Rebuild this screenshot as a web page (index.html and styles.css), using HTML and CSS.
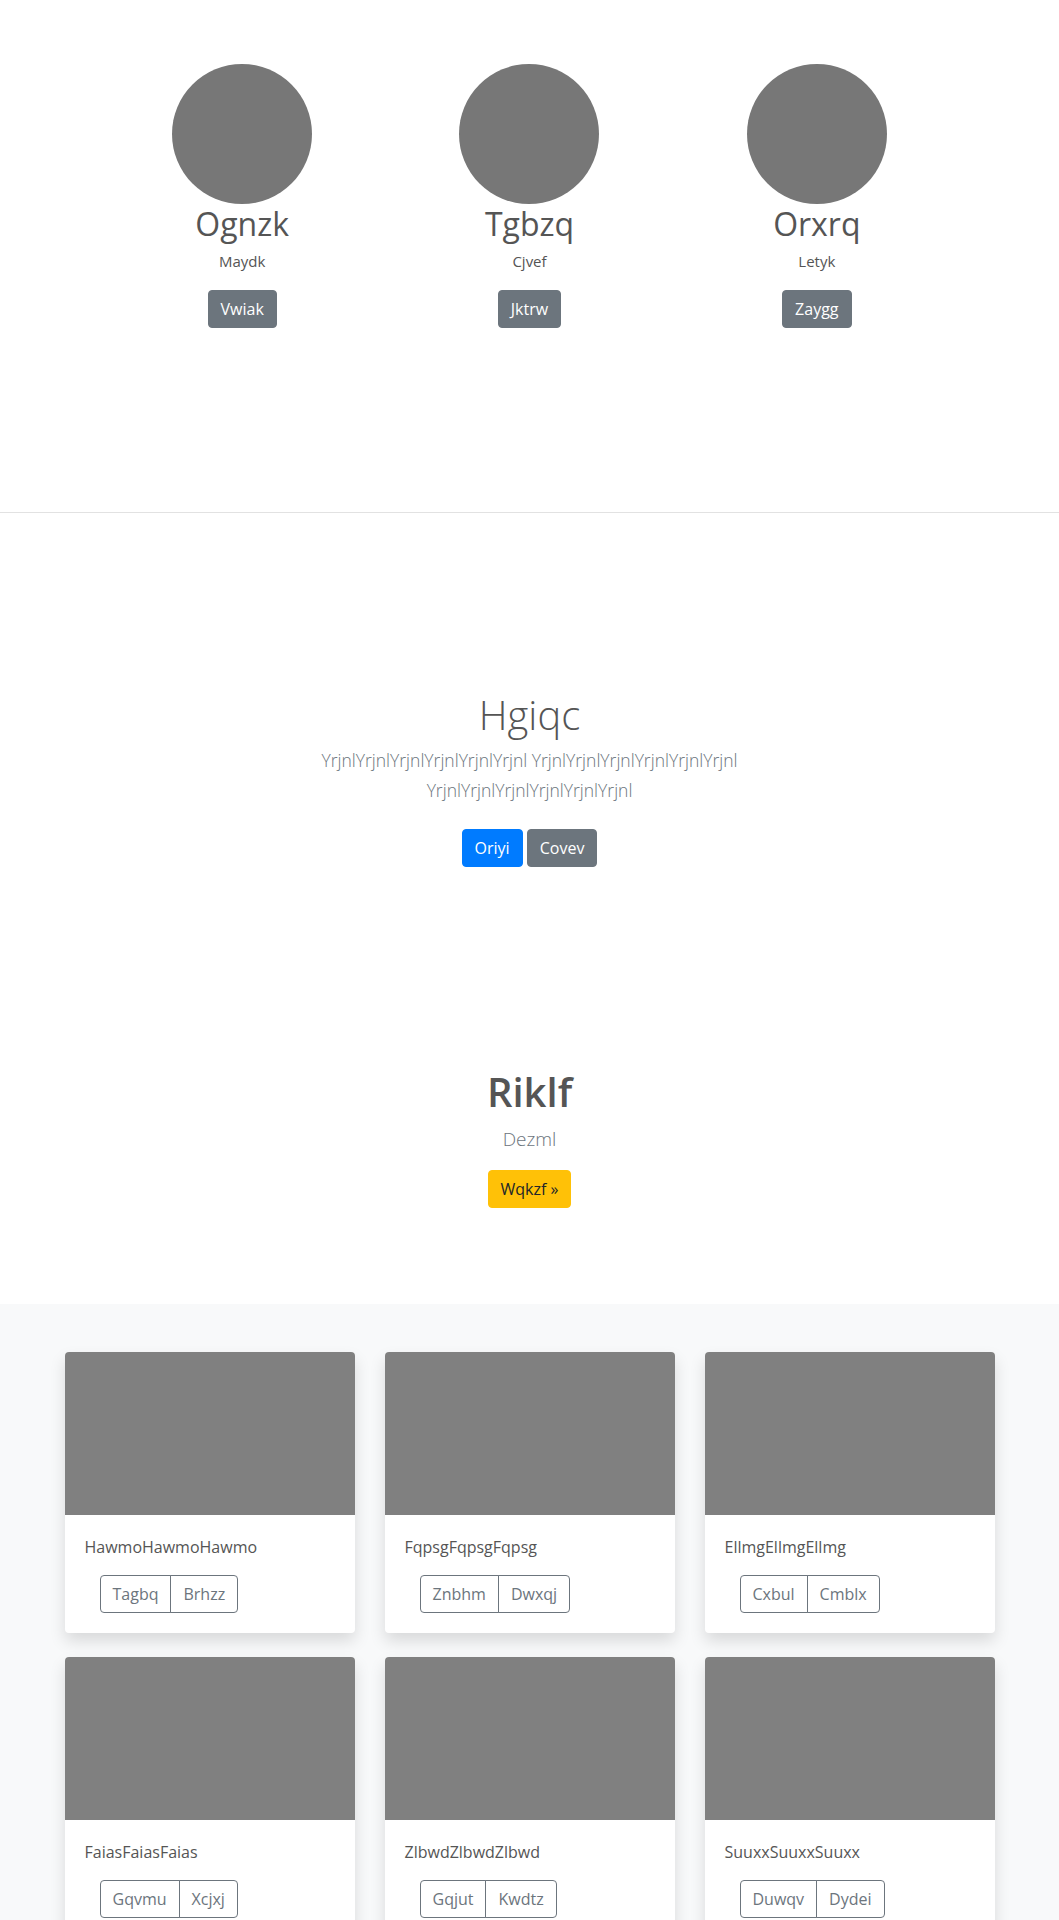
FILE: index.html
```html
<!DOCTYPE html>
<html lang="en">
<head>
<meta charset="utf-8">
<title>Page</title>
<link rel="stylesheet" href="styles.css">
</head>
<body>
<main>
  <section class="team">
    <div class="team-grid">
      <div class="member">
        <div class="avatar"></div>
        <h2 class="member-name">Ognzk</h2>
        <p class="member-role">Maydk</p>
        <a class="btn btn-secondary" href="#">Vwiak</a>
      </div>
      <div class="member">
        <div class="avatar"></div>
        <h2 class="member-name">Tgbzq</h2>
        <p class="member-role">Cjvef</p>
        <a class="btn btn-secondary" href="#">Jktrw</a>
      </div>
      <div class="member">
        <div class="avatar"></div>
        <h2 class="member-name">Orxrq</h2>
        <p class="member-role">Letyk</p>
        <a class="btn btn-secondary" href="#">Zaygg</a>
      </div>
    </div>
  </section>

  <section class="hero">
    <h1 class="hero-title">Hgiqc</h1>
    <p class="lead hero-lead">YrjnlYrjnlYrjnlYrjnlYrjnlYrjnl YrjnlYrjnlYrjnlYrjnlYrjnlYrjnl YrjnlYrjnlYrjnlYrjnlYrjnlYrjnl</p>
    <p class="hero-actions"><a class="btn btn-primary" href="#">Oriyi</a> <a class="btn btn-secondary" href="#">Covev</a></p>
  </section>

  <section class="cta">
    <h1 class="cta-title">Riklf</h1>
    <p class="lead cta-lead">Dezml</p>
    <a class="btn btn-warning" href="#">Wqkzf »</a>
  </section>

  <section class="album">
    <div class="album-grid">
      <div class="card">
        <div class="card-img"></div>
        <div class="card-body">
          <p class="card-text">HawmoHawmoHawmo</p>
          <div class="btn-group"><a class="btn btn-outline" href="#">Tagbq</a><a class="btn btn-outline" href="#">Brhzz</a></div>
        </div>
      </div>
      <div class="card">
        <div class="card-img"></div>
        <div class="card-body">
          <p class="card-text">FqpsgFqpsgFqpsg</p>
          <div class="btn-group"><a class="btn btn-outline" href="#">Znbhm</a><a class="btn btn-outline" href="#">Dwxqj</a></div>
        </div>
      </div>
      <div class="card">
        <div class="card-img"></div>
        <div class="card-body">
          <p class="card-text">EllmgEllmgEllmg</p>
          <div class="btn-group"><a class="btn btn-outline" href="#">Cxbul</a><a class="btn btn-outline" href="#">Cmblx</a></div>
        </div>
      </div>
      <div class="card">
        <div class="card-img"></div>
        <div class="card-body">
          <p class="card-text">FaiasFaiasFaias</p>
          <div class="btn-group"><a class="btn btn-outline" href="#">Gqvmu</a><a class="btn btn-outline" href="#">Xcjxj</a></div>
        </div>
      </div>
      <div class="card">
        <div class="card-img"></div>
        <div class="card-body">
          <p class="card-text">ZlbwdZlbwdZlbwd</p>
          <div class="btn-group"><a class="btn btn-outline" href="#">Gqjut</a><a class="btn btn-outline" href="#">Kwdtz</a></div>
        </div>
      </div>
      <div class="card">
        <div class="card-img"></div>
        <div class="card-body">
          <p class="card-text">SuuxxSuuxxSuuxx</p>
          <div class="btn-group"><a class="btn btn-outline" href="#">Duwqv</a><a class="btn btn-outline" href="#">Dydei</a></div>
        </div>
      </div>
    </div>
  </section>
</main>
</body>
</html>
```

FILE: styles.css
```css
* { box-sizing: border-box; }

html, body {
  margin: 0;
  padding: 0;
}

body {
  font-family: "Segoe UI", "Open Sans", "Noto Sans", sans-serif;
  font-size: 16px;
  line-height: 24px;
  color: #555;
  background: #fff;
}

p { margin: 0; }
h1, h2 { margin: 0; }

/* Buttons */
.btn {
  display: inline-block;
  font-size: 16px;
  line-height: 24px;
  padding: 6px 12px;
  border: 1px solid transparent;
  border-radius: 4px;
  text-decoration: none;
  text-align: center;
  vertical-align: middle;
}
.btn-secondary { background: #6c757d; border-color: #6c757d; color: #fff; }
.btn-primary { background: #007bff; border-color: #007bff; color: #fff; }
.btn-warning { background: #ffc107; border-color: #ffc107; color: #212529; }
.btn-outline { background: transparent; border-color: #6c757d; color: #6c757d; }

/* Team */
.team {
  padding: 64px 0 184px;
  border-bottom: 1px solid #e2e2e2;
}
.team-grid {
  width: 862px;
  margin: 0 auto;
  display: grid;
  grid-template-columns: repeat(3, 1fr);
  text-align: center;
}
.avatar {
  width: 140px;
  height: 140px;
  border-radius: 50%;
  background: #777;
  margin: 0 auto;
}
.member-name {
  font-size: 32px;
  line-height: 38px;
  font-weight: 400;
  margin: 1px 0 6px;
}
.member-role {
  font-size: 15px;
  line-height: 24px;
  margin-bottom: 17px;
}

/* Hero */
.hero {
  padding: 178px 0 100px;
  text-align: center;
}
.hero-title {
  font-size: 40px;
  line-height: 48px;
  font-weight: 300;
  margin-bottom: 6px;
}
.lead {
  font-size: 17.5px;
  line-height: 30px;
  font-weight: 300;
  color: #6c757d;
}
.hero-lead {
  max-width: 450px;
  margin: 0 auto 16px;
}
.hero-actions .btn { margin: 8px 0; }

/* CTA */
.cta {
  padding: 93px 0 96px;
  text-align: center;
}
.cta-title {
  font-size: 40px;
  line-height: 48px;
  font-weight: 600;
  margin-bottom: 8px;
}
.cta-lead {
  font-size: 19px;
  margin-bottom: 16px;
}

/* Album */
.album {
  background: #f8f9fa;
  padding: 48px 0;
}
.album-grid {
  width: 930px;
  margin: 0 auto;
  display: grid;
  grid-template-columns: repeat(3, 1fr);
  column-gap: 30px;
  row-gap: 24px;
}
.card {
  background: #fff;
  border-radius: 4px;
  overflow: hidden;
  box-shadow: 0 8px 16px rgba(0, 0, 0, 0.13);
}
.card-img {
  height: 163px;
  background: #808080;
}
.card-body { padding: 20px; }
.card-text { margin-bottom: 16px; }
.btn-group {
  display: inline-flex;
  margin-left: 15px;
}
.btn-group .btn + .btn { margin-left: -1px; }
.btn-group .btn:first-child { border-radius: 4px 0 0 4px; }
.btn-group .btn:last-child { border-radius: 0 4px 4px 0; }
```
